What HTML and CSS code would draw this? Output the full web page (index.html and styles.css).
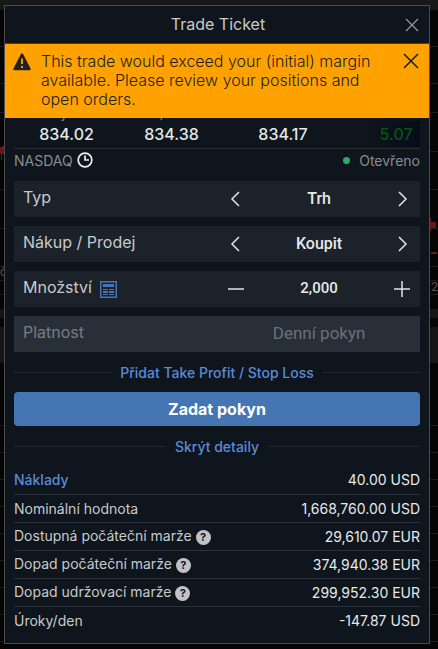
FILE: index.html
```html
<!DOCTYPE html>
<html lang="cs">
    <head>
        <meta charset="utf-8">
        <title>Trade Ticket</title>
        <meta name="viewport" content="width=device-width, initial-scale=1">
        <link rel="stylesheet" href="styles.css">
    </head>
    <body>
        <!-- chart behind the ticket -->
        <svg class="chart" aria-hidden="true">
            <rect width="100%" height="10" fill="#181818"/>
            <rect y="309" width="100%" height="9" fill="#161616"/>
            <rect y="327" width="100%" height="36" fill="#161616"/>
            <g fill="#1c1c1c">
                <rect y="46" width="100%" height="1"/>
                <rect y="83" width="100%" height="1"/>
                <rect y="112" width="100%" height="1"/>
                <rect y="151" width="100%" height="1"/>
                <rect y="189" width="100%" height="1"/>
                <rect y="228" width="100%" height="1"/>
                <rect y="266" width="100%" height="1"/>
                <rect y="280" width="100%" height="1"/>
                <rect y="294" width="100%" height="1"/>
                <rect y="425" width="100%" height="1"/>
                <rect y="452" width="100%" height="1"/>
                <rect y="479" width="100%" height="1"/>
                <rect y="506" width="100%" height="1"/>
                <rect y="533" width="100%" height="1"/>
                <rect y="560" width="100%" height="1"/>
                <rect y="587" width="100%" height="1"/>
                <rect y="614" width="100%" height="1"/>
                <rect y="641" width="100%" height="1"/>
            </g>
            <g fill="#6b1717">
                <path d="M0 147h2v-1h2v8H2v6H1v-6H0z"/>
                <path d="M430 218h1v4h5v6h-5v3h-1z"/>
                <rect y="252" x="431" width="6" height="2"/>
            </g>
            <text x="0" y="276" class="chart-text">č</text>
            <text x="431" y="291" class="chart-text">2</text>
        </svg>

        <form class="ticket">
            <header class="ticket-header">
                <h1>Trade Ticket</h1>
                <button type="button" class="close" aria-label="Close">
                    <svg width="14" height="14" viewBox="0 0 14 14"><path d="M1 1l12 12M13 1L1 13"/></svg>
                </button>
            </header>

            <div class="warning" role="alert">
                <svg class="warning-icon" width="18" height="18" viewBox="0 0 18 18">
                    <path d="M9 1.5L16.5 16H1.5z" fill="#222" stroke="#222" stroke-width="2.4" stroke-linejoin="round"/>
                    <path d="M9 5.5v5.5M9 13v2" stroke="#ffa200" stroke-width="1.8"/>
                </svg>
                <p>This trade would exceed your (initial) margin available. Please review your positions and open orders.</p>
                <button type="button" class="close" aria-label="Dismiss">
                    <svg width="16" height="16" viewBox="0 0 16 16"><path d="M1 1l14 14M15 1L1 15"/></svg>
                </button>
            </div>

            <div class="content">
                <div class="quotes">
                    <span class="quote"><small>Výše</small>834.02</span>
                    <span class="quote"><small>Poptávka</small>834.38</span>
                    <span class="quote">834.17</span>
                    <span class="quote change">5.07</span>
                </div>
                <div class="exchange">
                    <span>NASDAQ</span>
                    <svg width="16" height="16" viewBox="0 0 16 16" fill="none" stroke="#eee" stroke-width="1.7"><circle cx="8" cy="8" r="6.8"/><path d="M8 3.5V8h4"/></svg>
                    <span class="status">Otevřeno</span>
                </div>

                <div class="field">
                    <label for="type">Typ</label>
                    <div class="stepper">
                        <button type="button" aria-label="Previous type"><svg width="16" height="16" viewBox="0 0 16 16"><path d="M11 1L4 8l7 7"/></svg></button>
                        <input id="type" type="text" value="Trh" readonly>
                        <button type="button" aria-label="Next type"><svg width="16" height="16" viewBox="0 0 16 16"><path d="M5 1l7 7-7 7"/></svg></button>
                    </div>
                </div>
                <div class="field">
                    <label for="side">Nákup / Prodej</label>
                    <div class="stepper">
                        <button type="button" aria-label="Previous side"><svg width="16" height="16" viewBox="0 0 16 16"><path d="M11 1L4 8l7 7"/></svg></button>
                        <input id="side" type="text" value="Koupit" readonly>
                        <button type="button" aria-label="Next side"><svg width="16" height="16" viewBox="0 0 16 16"><path d="M5 1l7 7-7 7"/></svg></button>
                    </div>
                </div>
                <div class="field">
                    <label for="amount">Množství</label>
                    <button type="button" class="calculator" aria-label="Calculator">
                        <svg width="17" height="17" viewBox="0 0 17 17" fill="#4675b5">
                            <path fill-rule="evenodd" d="M0 0h17v17H0zM1.5 1.5v14h14v-14z"/>
                            <path d="M3 3h11v3H3zM3 8h5v1H3zM9 8h5v1H9zM3 10h5v2H3zM9 10h5v2H9zM3 13h5v1H3zM9 13h5v1H9z"/>
                        </svg>
                    </button>
                    <div class="stepper">
                        <button type="button" aria-label="Less"><svg width="16" height="16" viewBox="0 0 16 16"><path d="M0 8h16"/></svg></button>
                        <input id="amount" class="number" type="text" value="2,000">
                        <button type="button" aria-label="More"><svg width="16" height="16" viewBox="0 0 16 16"><path d="M0 8h16M8 0v16"/></svg></button>
                    </div>
                </div>
                <div class="field disabled">
                    <label for="duration">Platnost</label>
                    <div class="stepper">
                        <input id="duration" type="text" value="Denní pokyn" disabled>
                    </div>
                </div>

                <div class="divider"><button type="button">Přidat Take Profit / Stop Loss</button></div>
                <button type="button" class="submit">Zadat pokyn</button>
                <div class="divider"><button type="button">Skrýt detaily</button></div>

                <table class="details">
                    <tr>
                        <th scope="row"><a href="#">Náklady</a></th>
                        <td>40.00 USD</td>
                    </tr>
                    <tr>
                        <th scope="row">Nominální hodnota</th>
                        <td>1,668,760.00 USD</td>
                    </tr>
                    <tr>
                        <th scope="row">Dostupná počáteční marže<button type="button" class="help">?</button></th>
                        <td>29,610.07 EUR</td>
                    </tr>
                    <tr>
                        <th scope="row">Dopad počáteční marže<button type="button" class="help">?</button></th>
                        <td>374,940.38 EUR</td>
                    </tr>
                    <tr>
                        <th scope="row">Dopad udržovací marže<button type="button" class="help">?</button></th>
                        <td>299,952.30 EUR</td>
                    </tr>
                    <tr>
                        <th scope="row">Úroky/den</th>
                        <td>-147.87 USD</td>
                    </tr>
                </table>
            </div>
        </form>
    </body>
</html>
```
FILE: styles.css
```css
* {
    box-sizing: border-box;
}

body {
    margin: 0;
    padding: 5px 8px 4px 4px;
    min-height: 100vh;
    background: #050505;
    font-family: Inter, sans-serif;
    font-size: 14px;
    color: #c8cacc;
}

button {
    padding: 0;
    border: 0;
    background: none;
    color: inherit;
    font: inherit;
    cursor: pointer;
}

svg {
    display: block;
    flex: none;
}

/* Chart behind the ticket */
.chart {
    position: absolute;
    top: 0;
    left: 0;
    width: 100%;
    height: 100%;
}

.chart-text {
    fill: #555;
    font-size: 12px;
}

.ticket {
    position: relative;
    border: 1px solid #4b4b4b;
    background: #0e151d;
}

.ticket-header {
    display: flex;
    align-items: center;
    height: 38px;
    padding: 0 10px 0 26px;
    border-bottom: 1px solid #3c4148;
}

.ticket-header h1 {
    flex: 1;
    margin: 0 0 2px;
    font-size: 16px;
    font-weight: 400;
    text-align: center;
}

.close svg {
    fill: none;
    stroke: #999;
    stroke-width: 1.2;
}

/* Margin warning, lies over the top of the quotes */
.warning {
    position: relative;
    z-index: 1;
    display: flex;
    align-items: flex-start;
    padding: 8px 10px 9px 8px;
    background: #ffa200;
    color: #222;
}

.warning-icon {
    margin-top: 1px;
}

.warning p {
    flex: 1;
    margin: 0 24px 0 10px;
    font-size: 16px;
    font-weight: 300;
    line-height: 19px;
}

.warning .close {
    margin-top: 1px;
}

.warning .close svg {
    stroke: #222;
    stroke-width: 1.6;
}

.content {
    padding: 0 9px 9px;
}

.quotes {
    display: grid;
    grid-template-columns: 105fr 105fr 118fr 78fr;
    align-items: end;
    margin-top: -12px;
    padding-bottom: 1px;
    border-bottom: 1px solid #2d2d2d;
    font-size: 16px;
    font-weight: 500;
    line-height: 26px;
    color: #e6e6e6;
    text-align: center;
}

.quote small {
    display: block;
    font-size: 12px;
    font-weight: 400;
    line-height: 15px;
    color: #8a8d90;
}

.change {
    padding-left: 30px;
    background: linear-gradient(90deg, #0e151d 30%, #050d1b);
    color: #0a5412;
}

.exchange {
    display: flex;
    align-items: center;
    gap: 4px;
    height: 22px;
    margin-bottom: 10px;
    color: #8a8d90;
}

.status {
    display: flex;
    align-items: center;
    gap: 9px;
    margin-left: auto;
}

.status::before {
    content: "";
    width: 7px;
    height: 7px;
    border-radius: 50%;
    background: #27ae60;
}

/* Order fields */
.field {
    display: flex;
    align-items: center;
    height: 36px;
    margin-bottom: 9px;
    padding: 0 10px 0 9px;
    background: #1b222a;
    font-size: 16px;
}

.field label {
    padding-bottom: 4px;
}

.calculator {
    margin-left: 8px;
}

.stepper {
    display: flex;
    align-items: center;
    width: 47%;
    margin-left: auto;
}

.stepper svg {
    fill: none;
    stroke: #e4e4e4;
    stroke-width: 1.5;
}

.stepper input {
    flex: 1;
    min-width: 0;
    padding: 0 0 2px;
    border: 0;
    background: none;
    color: #e8e8e8;
    font-family: Roboto, sans-serif;
    font-size: 16px;
    font-weight: 500;
    text-align: center;
}

.stepper .number {
    font-size: 15px;
}

.disabled {
    background: #292f38;
    color: #777c84;
}

.disabled .stepper input {
    color: #6b717a;
    font-size: 17px;
    font-weight: 400;
}

.divider {
    display: flex;
    align-items: center;
    gap: 9px;
    height: 40px;
    color: #5b8bd6;
    font-weight: 500;
}

.divider::before,
.divider::after {
    content: "";
    flex: 1;
    height: 1px;
    background: #24282d;
}

.field + .divider {
    margin-top: -9px;
}

.submit {
    display: block;
    width: 100%;
    height: 34px;
    border-radius: 4px;
    background: #4675b3;
    color: #fff;
    font-size: 16px;
    font-weight: 700;
}

/* Cost details */
.details {
    width: 100%;
    border-collapse: collapse;
}

.details tr + tr {
    border-top: 1px solid #2c333b;
}

.details th,
.details td {
    height: 28px;
    padding: 0;
    font-weight: 400;
    text-align: left;
}

.details td {
    color: #e8e8e8;
    text-align: right;
}

.details a {
    color: #5b8bd6;
    font-weight: 500;
    text-decoration: none;
}

.help {
    width: 15px;
    height: 15px;
    margin-left: 4px;
    border-radius: 50%;
    background: #c0c2c8;
    color: #0e151d;
    font-size: 11px;
    font-weight: 700;
    line-height: 15px;
    vertical-align: middle;
}
```
